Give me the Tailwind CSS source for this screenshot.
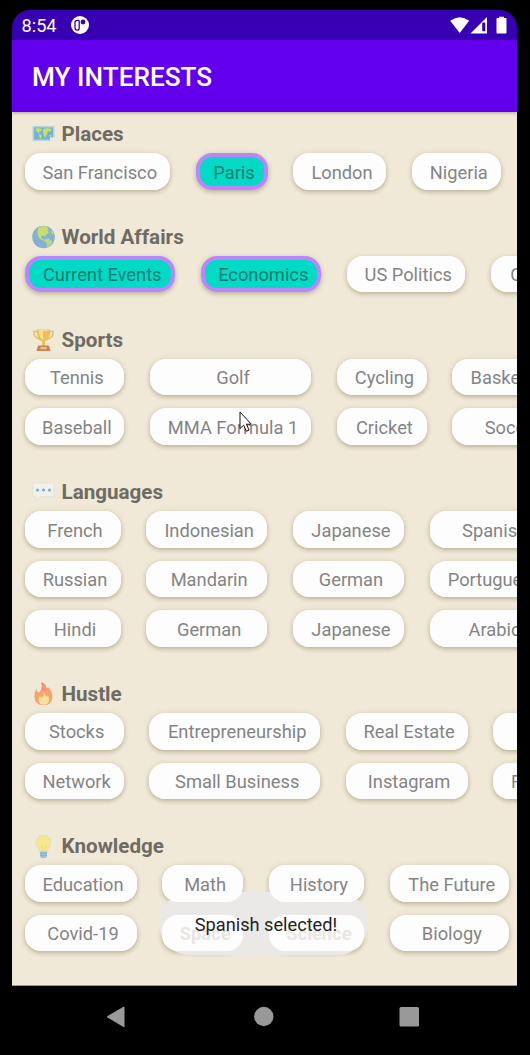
<!DOCTYPE html>
<html lang="en">
<head>
<meta charset="utf-8">
<title>My Interests</title>
<script src="https://cdn.jsdelivr.net/npm/@tailwindcss/browser@4"></script>
</head>
<body class="bg-black h-[1055px] w-[530px] overflow-hidden font-['Roboto',sans-serif]">
<div class="relative ml-3 mt-[10px] w-[505px] h-[1045px] flex flex-col overflow-hidden rounded-t-[18px]">
  <header class="h-[30px] shrink-0 bg-[#3700b3] flex items-center text-white pl-[9.500px] pr-[9px]">
    <span class="text-[18.200px] leading-[30px] w-[35px] mt-[2px] whitespace-nowrap">8:54</span>
    <svg class="ml-[14.500px]" width="18" height="18" viewBox="0 0 18 18"><circle cx="9" cy="9" r="9" fill="#fff"/><path d="M8.300 4.300H6.200Q4 4.300 4 6.500v5.200q0 2.400 2.200 2.400t2-2.400V4.500" fill="none" stroke="#3700b3" stroke-width="1.300"/><circle cx="12" cy="6" r="2.400" fill="#3700b3"/></svg>
    <svg class="ml-auto" width="58" height="18" viewBox="0 0 58 18" fill="#fff"><path d="M.2 4.800Q9.700-2.200 19.200 4.800L9.700 17Z"/><path fill-rule="evenodd" d="M37 1V17.500H20.500ZM35.300 6.500H33q-.8 0-.8.8V14.500q0 .8.800.8h2.300Z"/><path d="M46.500 2.800q0-.9.900-.9H49V.8h5v1.100h1.600q.9 0 .9.900v13.800q0 .9-.9.900h-8.200q-.9 0-.9-.9Z"/></svg>
  </header>
  <div class="relative z-10 h-[72px] shrink-0 bg-[#6200ee] flex items-center pl-5 text-white text-[26.200px] font-medium shadow-[0_1px_3px_rgba(60,50,20,.35)]"><h1 class="mt-[4px] whitespace-nowrap">MY INTERESTS</h1></div>
  <main id="list" class="h-[874px] shrink-0 bg-[#f0e9d7] pt-[3px] pl-[12.500px] overflow-hidden border-b border-[#99958a]"></main>
  <nav class="h-[61px] shrink-0 bg-black">
    <svg width="505" height="61" viewBox="0 0 505 61" fill="#999"><path d="M95.500 31.500Q94.500 31 95.500 30L111.500 20.700q1-.5 1 .5v19.200q0 1-1 .5Z"/><circle cx="251.800" cy="30.500" r="9.700"/><rect x="387.500" y="21" width="19.500" height="19.500" rx="1.500"/></svg>
  </nav>
  <div class="absolute z-10 left-[147px] top-[882px] w-[209px] h-[63px] rounded-[31px] bg-[#ebe9e7]"></div>
  <div class="absolute z-30 left-[147px] top-[882px] w-[209px] h-[63px] flex items-center justify-center text-[18.200px] text-[#222] pl-[5px] pt-[2px] whitespace-nowrap">Spanish selected!</div>
  <svg class="absolute left-[226.500px] top-[401px]" width="14" height="22" viewBox="0 0 14 22"><path d="M1 1V17.500L4.600 14.200 7.300 20.300 10 19.100 7.500 13.200H12.300Z" fill="#fff" stroke="#111" stroke-width="1"/></svg>
</div>
<script>
const icons = {
  map: '<path d="M.5 2H22.500V13.500L18 17H.5Z" fill="#b8d2dc"/><path d="M2 3.500H21V13l-4 2.500H2Z" fill="#73b1d7"/><path d="M3 5l3-1 4 1-1 2-2 1v2L4.500 7ZM7 10l3 1-1.500 4-1-1ZM11 5l4-1 5 1-2 3-2-1-1 3-2 4-2-5ZM17 11l2 0 1 1-2 1Z" fill="#c4df68"/><path d="M18 17v-3.500h4.500Z" fill="#e3efef"/>',
  globe: '<circle cx="11.500" cy="11" r="11.300" fill="#83b0d5"/><path d="M6 2Q10-1 15 .5L17 4l-2 .5L17 7l-3 1.500-1 2-3-1-1 2.500 3 2-1 1-4-3-1.500-4Z" fill="#c7df66"/><path d="M12.500 13l4-.5 4 3-2 3.500-3 3-1-5-2.500-2Z" fill="#b8d68c"/><path d="M19 4l2.500 3-1 2-1.500-3Z" fill="#c7df66"/>',
  cup: '<path d="M5 2.500H1.800q0 7 6 7.500M18 2.500h3.200q0 7-6 7.500" fill="none" stroke="#e9be72" stroke-width="1.500"/><path d="M4.700 0H18.300q0 11-5.300 12.500V17h-3v-4.500Q4.700 11 4.700 0Z" fill="#eebf58"/><path d="M7 1h4v10Q7 9 7 1Z" fill="#f8df8e"/><path d="M6 16.500H17L18.500 22H4.500Z" fill="#c98455"/><path d="M8.500 18h6v2.300h-6Z" fill="#edc570"/><ellipse cx="11.500" cy="1" rx="6.800" ry="1" fill="#f7dc91"/>',
  chat: '<path d="M1.500 2H21q1.200 0 1.200 1.200V14.500q0 1.200-1.200 1.200H8Q5 19 2.500 19.500 5 17.500 4 15.700H2Q.8 15.500.8 14.500V3Z" fill="#f1f0ec" stroke="#dedbd2" stroke-width=".6"/><g fill="#75b1db"><circle cx="5.500" cy="9" r="1.600"/><circle cx="11.500" cy="9" r="1.600"/><circle cx="17.500" cy="9" r="1.600"/></g>',
  fire: '<path d="M9 -.8q5 1 5.500 6.500 1.500-1 1.300-2 4.500 4.500 4.700 10Q20.500 22 11.500 22.300 3 22 2.500 14q-.3-4 1.800-8.500Q4.500 8.500 6.500 10 11.500 5 9-.8Z" fill="#f6a46b"/><path d="M9 -.8q5 1 5.500 6.500L13 9 9.500 7Q11 3 9-.8Z" fill="#f49079"/><path d="M11.500 7.500q.5 4 3.500 6.500 1-1 .5-2.500 2.500 4 1.500 7-1.500 3.200-5.500 3.200t-5-4q-.3-3 1.500-5 .3 1.500 1.500 2.300Q12.500 12 11.500 7.500Z" fill="#f7e0a0"/>',
  bulb: '<path d="M7.500 15.500Q7 12.500 5.500 11 4.200 9 4.200 7 4.500-.5 11.500-.7 18.500-.5 18.800 7q0 2-1.300 4-1.500 1.500-2 4.500Z" fill="#f6e68c" stroke="#ddd5ae" stroke-width=".5"/><path d="M9.500 9l1 6M13.500 9l-1 6" stroke="#f2da80" fill="none"/><path d="M8 15.500h7v4q0 2-2 2.500H10q-2-.5-2-2.500Z" fill="#94c1df"/><path d="M8 17.500h7M8 19.500h7" stroke="#7fb0d4" stroke-width=".8"/>'
};
const sections = [
  ['map', 'Places', [145.5,72,93,89.5], [['San Francisco','*Paris','London','Nigeria']]],
  ['globe', 'World Affairs', [150.5,120.5,118.5,97], [['*Current Events','*Economics','US Politics','Climate']]],
  ['cup', 'Sports', [99.7,161.7,90,116], [['Tennis','Golf','Cycling','Basketball'],['Baseball','MMA Formula 1','Cricket','Soccer']]],
  ['chat', 'Languages', [96,121.3,111.3,125], [['French','Indonesian','Japanese','Spanish'],['Russian','Mandarin','German','Portuguese'],['Hindi','German','Japanese','Arabic']]],
  ['fire', 'Hustle', [99.3,170.8,122,95], [['Stocks','Entrepreneurship','Real Estate','Tech'],['Network','Small Business','Instagram','Finance']]],
  ['bulb', 'Knowledge', [112,81.3,95.3,119.5], [['Education','Math','History','The Future'],['Covid-19','Space','Science','Biology']]]
];
const labelStyle = {
  on: 'bg-[#03dac5] border-4 border-[#bb86fc] text-[#077c70]',
  off: 'bg-[#fdfdfd] text-[#848484]',
  raised: 'relative z-20 bg-[#fdfdfd] text-[#848484]',
  faded: 'relative z-20 bg-[#fdfdfd] text-[#e9e6e3] font-bold'
};
const special = { Math: 'raised', History: 'raised', Space: 'faded', Science: 'faded' };
document.getElementById('list').innerHTML = sections.map(([icon, title, widths, rows]) => `
  <section class="pb-[15.200px] w-[700px]">
    <h2 class="h-[38px] pt-px flex items-center pl-[7.500px] text-[20.600px] font-bold text-[#6e6b63] whitespace-nowrap"><svg class="mr-[6.500px] overflow-visible" width="23" height="22" viewBox="0 0 23 22">${icons[icon]}</svg>${title}</h2>
    ${rows.map(r => `<div class="flex gap-[25.500px] mb-[13px]">${r.map((t, i) => {
      const on = t[0] === '*';
      return `<div style="width:${widths[i]}px" class="shrink-0 h-[36.600px] rounded-[16px] shadow-[0_2px_4px_rgba(90,80,40,.32),0_0_7px_rgba(90,80,40,.08)]"><div class="h-full w-full rounded-[16px] flex items-center justify-center pl-[5px] pt-[2px] text-[18.300px] whitespace-nowrap ${labelStyle[on ? 'on' : special[t] || 'off']}">${on ? t.slice(1) : t}</div></div>`;
    }).join('')}</div>`).join('')}
  </section>`).join('');
</script>
</body>
</html>
